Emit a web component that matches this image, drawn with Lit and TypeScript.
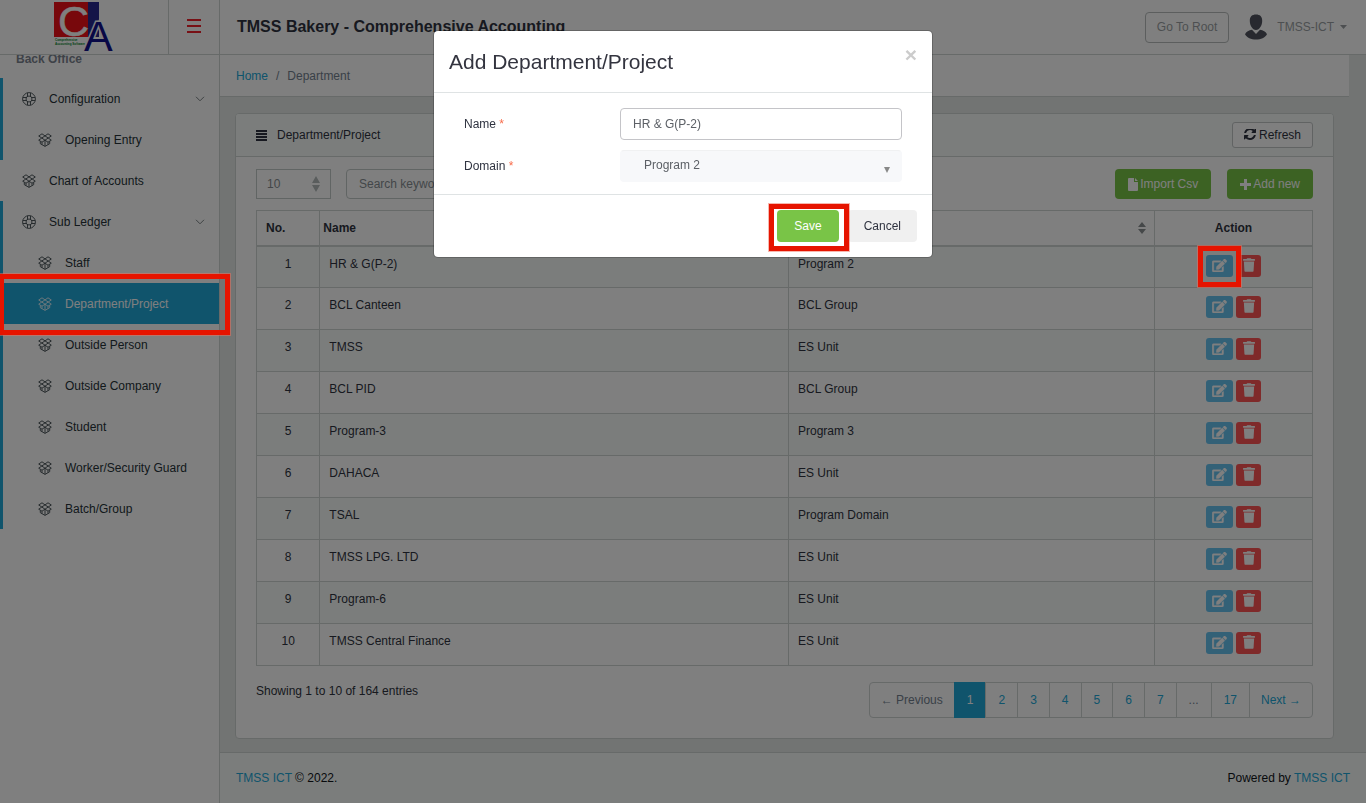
import { LitElement, html, css, nothing } from "lit";
import { customElement, state } from "lit/decorators.js";

interface Department {
  name: string;
  domain: string;
}

const departments: Department[] = [
  { name: "HR & G(P-2)", domain: "Program 2" },
  { name: "BCL Canteen", domain: "BCL Group" },
  { name: "TMSS", domain: "ES Unit" },
  { name: "BCL PID", domain: "BCL Group" },
  { name: "Program-3", domain: "Program 3" },
  { name: "DAHACA", domain: "ES Unit" },
  { name: "TSAL", domain: "Program Domain" },
  { name: "TMSS LPG. LTD", domain: "ES Unit" },
  { name: "Program-6", domain: "ES Unit" },
  { name: "TMSS Central Finance", domain: "ES Unit" },
];

const subLedger = [
  "Staff",
  "Department/Project",
  "Outside Person",
  "Outside Company",
  "Student",
  "Worker/Security Guard",
  "Batch/Group",
];

const boxIcon = html`<svg class="nav-icon" viewBox="0 0 14 14" fill="none" stroke="currentColor" stroke-linejoin="round">
  <path d="M4 .8 7 2.900 3.800 5 .7 3zM10 .8 7 2.900l3.200 2.100 3.100-2zM3.800 5 7 7.200 10.200 5M3.800 5 .7 7.200 4 9.200l3-2 3 2 3.300-2L10.200 5M2.300 8.400v2.300L7 13.400l4.700-2.700V8.400M7 7.200v6M4 9.200v2.400M10 9.200v2.400" />
</svg>`;

const supportIcon = html`<svg class="nav-icon" viewBox="0 0 14 14" fill="none" stroke="currentColor">
  <circle cx="7" cy="7" r="6.400" />
  <circle cx="7" cy="7" r="3" />
  <path d="M5.500.8v3.600M8.500.8v3.600M5.500 9.600v3.600M8.500 9.600v3.600M.8 5.500h3.600M.8 8.500h3.600M9.600 5.500h3.600M9.600 8.500h3.600" />
</svg>`;

const chevron = html`<svg class="chevron" viewBox="0 0 10 6" fill="none" stroke="currentColor"><path d="M1 .8 5 4.800 9 .8" /></svg>`;

const editIcon = html`<svg class="edit-icon" viewBox="0 0 576 512" fill="currentColor" stroke="currentColor" stroke-width="14"><path d="M402.600 83.200l90.200 90.200c3.800 3.800 3.800 10 0 13.800L274.400 405.600l-92.800 10.300c-12.400 1.400-22.900-9.100-21.500-21.500l10.300-92.800L388.800 83.200c3.800-3.800 10-3.800 13.800 0zm162-22.900l-48.800-48.800c-15.200-15.200-39.900-15.200-55.200 0l-35.400 35.400c-3.800 3.800-3.800 10 0 13.800l90.200 90.200c3.800 3.800 10 3.800 13.800 0l35.400-35.400c15.200-15.300 15.200-40 0-55.200zM384 346.200V448H64V128h229.800c3.200 0 6.200-1.300 8.500-3.500l40-40c7.600-7.600 2.200-20.500-8.500-20.500H48C21.500 64 0 85.500 0 112v352c0 26.500 21.500 48 48 48h352c26.500 0 48-21.500 48-48V306.200c0-10.700-12.900-16-20.500-8.500l-40 40c-2.200 2.300-3.500 5.300-3.500 8.500z" /></svg>`;

const trashIcon = html`<svg class="trash-icon" viewBox="0 0 448 512" fill="currentColor"><path d="M432 32H312l-9.400-18.700A24 24 0 0 0 281.100 0H166.800a23.720 23.720 0 0 0-21.400 13.300L136 32H16A16 16 0 0 0 0 48v32a16 16 0 0 0 16 16h416a16 16 0 0 0 16-16V48a16 16 0 0 0-16-16zM53.200 467a48 48 0 0 0 47.900 45h245.800a48 48 0 0 0 47.900-45L416 128H32z" /></svg>`;

const sortIcon = html`<svg class="sort" viewBox="0 0 8 12" fill="currentColor"><path d="M4 0 8 5H0zM0 7h8l-4 5z" /></svg>`;

const logo = html`<svg class="logo" viewBox="0 0 64 54" font-family="Liberation Sans, Arial, sans-serif">
  <rect x="2" y="2" width="34" height="35" fill="#f01018" />
  <rect x="36" y="2" width="11" height="35" fill="#282890" />
  <text x="6" y="36" font-size="43" fill="#fff" stroke="#fff" stroke-width=".5">C</text>
  <text x="32" y="51" font-size="43" fill="#10108c" stroke="#fff" stroke-width="3" paint-order="stroke">A</text>
  <g font-size="3" font-weight="700" fill="#00852c"><text x="3" y="41">Comprehensive</text><text x="3" y="45">Accounting Software</text></g>
</svg>`;

@customElement("app-root")
export class AppRoot extends LitElement {
  @state() private page = "1";

  static styles = css`
    :host {
      display: block;
      font: 12px/18px "Liberation Sans", Arial, sans-serif;
      color: #2f3340;
      background: #e4e9e7;
    }
    * { box-sizing: border-box; }
    a { color: #20a8d8; text-decoration: none; }
    button, input, select { font: inherit; color: inherit; margin: 0; }
    button { cursor: pointer; }
    ul, ol { list-style: none; margin: 0; padding: 0; }
    svg { display: block; flex: none; }

    .shell {
      min-height: 100vh;
      display: grid;
      grid-template: 55px 1fr / 220px minmax(0, 1fr);
    }

    .topbar {
      grid-column: 1 / -1;
      display: flex;
      align-items: stretch;
      background: #fff;
      border-bottom: 1px solid #cfd4d3;
    }
    .brand {
      width: 169px;
      display: flex;
      justify-content: center;
      border-right: 1px solid #cfd4d3;
    }
    .logo { width: 64px; height: 54px; }
    .toggle {
      width: 51px;
      display: flex;
      align-items: center;
      justify-content: center;
      padding: 0 0 2px;
      border: 0;
      border-right: 1px solid #cfd4d3;
      background: none;
      color: #f0202a;
    }
    .toggle svg { width: 14px; height: 14px; }
    .title { margin: 0; padding: 0 17px; align-self: center; font-size: 16px; line-height: 24px; font-weight: 700; }
    .account { margin-left: auto; padding-right: 19px; display: flex; align-items: center; color: #9a9fa3; }
    .root-btn {
      height: 31px;
      padding: 0 11px;
      border: 1px solid #b8bcbc;
      border-radius: 4px;
      background: none;
    }
    .avatar { width: 22px; height: 26px; margin: 0 10px 0 16px; }
    .caret { width: 7px; height: 4px; margin-left: 6px; }

    .sidebar { background: #fff; border-right: 1px solid #cfd4d3; }
    .nav-title {
      height: 23px;
      padding-left: 16px;
      overflow: hidden;
      font-weight: 700;
      line-height: 8px;
      color: #7d8490;
    }
    .group { border-left: 3px solid #20a8d8; }
    .nav-row { position: relative; }
    .nav-link {
      display: flex;
      align-items: center;
      gap: 13px;
      height: 41px;
      padding: 0 14px 0 19px;
      color: #263238;
    }
    .plain { padding-left: 22px; }
    .child { padding-left: 35px; }
    .active { background: #20a8d8; color: #fff; }
    .nav-icon { width: 14px; height: 14px; opacity: 0.8; }
    .chevron { width: 10px; height: 6px; margin-left: auto; opacity: 0.6; }

    .callout {
      position: absolute;
      border: 5px solid #e61400;
      outline: 1px solid #f0705e80;
      z-index: 15;
      pointer-events: none;
    }
    .callout-nav { inset: -9px -11px -11px -4px; }
    .callout-edit { inset: -9px -8px -10px -8px; }
    .callout-save { inset: -6px -10px -9px -8px; }

    .page { display: flex; flex-direction: column; }
    .content { flex: 1; padding-right: 17px; }
    .crumbs {
      display: flex;
      gap: 8px;
      padding: 12px 16px 11px;
      background: #fff;
      border-bottom: 1px solid #cfd4d3;
      color: #73818f;
    }
    .card {
      margin: 16px 15px 12px;
      background: #fff;
      border: 1px solid #cfd4d3;
      border-radius: 4px;
    }
    .card-head {
      display: flex;
      align-items: center;
      gap: 10px;
      height: 43px;
      padding: 0 20px;
      background: #f6faf9;
      border-bottom: 1px solid #cfd4d3;
      border-radius: 3px 3px 0 0;
    }
    .card-head h2 { margin: 0; font-size: 12px; font-weight: 400; }
    .lines { width: 11px; height: 11px; }
    .refresh {
      margin-left: auto;
      display: flex;
      align-items: center;
      gap: 3px;
      height: 26px;
      padding: 0 11px;
      border: 1px solid #c2c7c7;
      border-radius: 3px;
      background: #fff;
    }
    .refresh svg { width: 12px; height: 12px; }
    .card-body { padding: 12px 20px 20px; }
    .tools { display: flex; margin-bottom: 11px; }
    .length { position: relative; width: 75px; margin-right: 15px; color: #b5bbbb; }
    .length select {
      appearance: none;
      width: 100%;
      height: 30px;
      padding: 0 10px;
      border: 1px solid #c2cac9;
      border-radius: 0;
      background: #fff;
      color: #868e92;
    }
    .length svg { position: absolute; right: 11px; top: 7px; width: 8px; height: 16px; }
    .search {
      width: 200px;
      height: 30px;
      padding: 0 12px;
      border: 1px solid #c2cac9;
      border-radius: 4px;
      background: #fff;
    }
    .search::placeholder { color: #868e92; opacity: 1; }
    .tool-btn {
      display: flex;
      align-items: center;
      gap: 2px;
      height: 30px;
      padding: 0 13px;
      border: 0;
      border-radius: 4px;
      background: #79c447;
      color: #fff;
    }
    .tool-btn svg { height: 13px; }
    .import { margin-left: auto; margin-right: 16px; }

    .grid { width: 100%; border-collapse: collapse; table-layout: fixed; }
    .grid th, .grid td { border: 1px solid #cfd4d3; }
    .grid th { height: 35px; padding: 0 8px 0 3px; text-align: left; border-bottom-width: 2px; }
    .grid td { height: 42px; padding: 8px 9px; vertical-align: top; }
    .grid tbody tr:nth-child(odd) { background: #f6faf9; }
    .grid .col-no { width: 6%; }
    .grid .col-domain { width: 366px; }
    .grid .col-action { width: 158px; }
    .grid th.no { padding-left: 9px; }
    .grid td.no, .grid th.action { text-align: center; }
    .grid th.action { padding: 0; }
    .th-flex { display: flex; align-items: center; justify-content: space-between; }
    .sort { width: 8px; height: 12px; color: #8b9092; }
    .actions { display: flex; justify-content: center; gap: 3px; }
    .slot { position: relative; }
    .icon-btn {
      display: flex;
      align-items: flex-start;
      justify-content: center;
      width: 27px;
      height: 22px;
      padding: 4px 0 0;
      border: 0;
      border-radius: 3px;
      color: #fff;
    }
    .edit { background: #67c2ef; }
    .delete { width: 25px; padding-top: 3px; background: #ff5454; }
    .edit-icon { width: 15px; height: 13px; }
    .trash-icon { width: 12px; height: 14px; }

    .table-foot { display: flex; justify-content: space-between; align-items: flex-start; margin-top: 16px; }
    .pager { display: flex; }
    .pager button {
      height: 36px;
      padding: 0 12px;
      margin-left: -1px;
      border: 1px solid #cfd4d3;
      background: #fff;
      color: #20a8d8;
    }
    .pager li:first-child button { padding: 0 11px; border-radius: 4px 0 0 4px; }
    .pager li:last-child button { padding: 0 11px; border-radius: 0 4px 4px 0; }
    .pager .muted { color: #73818f; }
    .pager .current { background: #20a8d8; border-color: #20a8d8; color: #fff; }

    .footer {
      display: flex;
      align-items: center;
      justify-content: space-between;
      height: 51px;
      padding: 0 16px;
      background: #f6faf9;
      border-top: 1px solid #cfd4d3;
      color: #101418;
    }

    .backdrop { position: fixed; inset: 0; background: #00000080; z-index: 10; }
    .layer {
      position: fixed;
      inset: 0;
      z-index: 20;
      display: flex;
      align-items: flex-start;
      justify-content: center;
      padding: 30px 16px;
    }
    .modal {
      width: 100%;
      max-width: 500px;
      background: #fff;
      background-clip: padding-box;
      border: 1px solid #00000033;
      border-radius: 5px;
    }
    .modal-head {
      display: flex;
      align-items: flex-start;
      justify-content: space-between;
      padding: 15px;
      border-bottom: 1px solid #dfe3e4;
    }
    .modal-head h1 { margin: 0; font-size: 21px; line-height: 31px; font-weight: 400; color: #33343f; }
    .close { padding: 0; border: 0; background: none; font-size: 21px; line-height: 18px; font-weight: 700; color: #ccc; }
    .modal-body { display: grid; gap: 10px; padding: 15px 15px 12px; }
    .field { display: grid; grid-template-columns: 1fr 2fr; align-items: center; }
    .field label { padding: 0 15px; }
    .req { color: #f86c4b; }
    .control { position: relative; padding: 0 15px; display: flex; }
    .control input, .control select {
      width: 100%;
      height: 32px;
      padding: 0 12px;
      border: 1px solid #c4c4c8;
      border-radius: 4px;
      background: #fff;
      color: #5c6066;
    }
    .control select {
      appearance: none;
      padding: 0 23px 2px;
      border-color: #f0f1f2 #f7f8fa #f7f8fa;
      background: #f7f8fa;
    }
    .control .drop { position: absolute; right: 27px; bottom: 9px; width: 6px; height: 6px; color: #888; }
    .modal-foot { display: flex; justify-content: flex-end; gap: 9px; padding: 15px; border-top: 1px solid #dfe3e4; }
    .btn { display: block; height: 32px; padding: 0 16px; border: 0; border-radius: 4px; background: #f0f0f0; }
    .save { padding: 0 17px; background: #79c447; color: #fff; }
  `;

  private navChild(label: string) {
    const active = label === "Department/Project";
    return html`<li class="nav-row">
      <a class="nav-link child ${active ? "active" : ""}" href="#">${boxIcon}<span>${label}</span></a>
      ${active ? html`<span class="callout callout-nav"></span>` : nothing}
    </li>`;
  }

  private pageButton(label: string, muted = false) {
    const cls = label === this.page ? "current" : muted ? "muted" : "";
    return html`<li><button type="button" class=${cls} @click=${() => { if (/^\d+$/.test(label)) this.page = label; }}>${label}</button></li>`;
  }

  render() {
    return html`
      <div class="shell">
        <header class="topbar">
          <div class="brand">${logo}</div>
          <button class="toggle" type="button" aria-label="Toggle sidebar">
            <svg viewBox="0 0 14 14" stroke="currentColor" stroke-width="2"><path d="M0 1h14M0 7h14M0 13h14" /></svg>
          </button>
          <p class="title">TMSS Bakery - Comprehensive Accounting</p>
          <div class="account">
            <button class="root-btn" type="button">Go To Root</button>
            <svg class="avatar" viewBox="0 0 22 26" fill="#50535e">
              <path d="M11 .5c4 0 6.200 2 6.200 6.400 0 4.300-2.600 9-6.200 9s-6.200-4.700-6.200-9C4.800 2.500 7 .5 11 .5zM7 15.800l4 4.200 4-4.200c3 .6 6 2 7 4.400-2 3.300-6 5.300-11 5.300S2 23.500 0 20.200c1-2.400 4-3.800 7-4.400z" />
            </svg>
            <span>TMSS-ICT</span>
            <svg class="caret" viewBox="0 0 7 4" fill="currentColor"><path d="M0 0h7L3.500 4z" /></svg>
          </div>
        </header>

        <nav class="sidebar" aria-label="Main">
          <div class="nav-title">Back Office</div>
          <ul class="group">
            <li><a class="nav-link" href="#">${supportIcon}<span>Configuration</span>${chevron}</a></li>
            ${this.navChild("Opening Entry")}
          </ul>
          <a class="nav-link plain" href="#">${boxIcon}<span>Chart of Accounts</span></a>
          <ul class="group">
            <li><a class="nav-link" href="#">${supportIcon}<span>Sub Ledger</span>${chevron}</a></li>
            ${subLedger.map((label) => this.navChild(label))}
          </ul>
        </nav>

        <div class="page">
          <main class="content">
            <div class="crumbs"><a href="#">Home</a><span>/</span><span>Department</span></div>
            <section class="card">
              <div class="card-head">
                <svg class="lines" viewBox="0 0 11 11" stroke="currentColor" stroke-width="2"><path d="M0 1h11M0 4h11M0 7h11M0 10h11" /></svg>
                <h2>Department/Project</h2>
                <button class="refresh" type="button">
                  <svg viewBox="0 0 1536 1536" fill="currentColor"><path transform="translate(0 -128)" d="M1511 928q0 5-1 7-64 268-268 434.500t-478 166.500q-146 0-282.500-55t-243.500-157l-129 129q-19 19-45 19t-45-19-19-45v-448q0-26 19-45t45-19h448q26 0 45 19t19 45-19 45l-137 137q71 66 161 102t187 36q134 0 250-65t186-179q11-17 53-117 8-23 30-23h192q13 0 22.500 9.500t9.500 22.500zm25-800v448q0 26-19 45t-45 19h-448q-26 0-45-19t-19-45 19-45l138-138q-148-137-349-137-134 0-250 65t-186 179q-11 17-53 117-8 23-30 23h-199q-13 0-22.500-9.500t-9.500-22.500v-7q65-268 270-434.500t480-166.500q146 0 284 55.500t245 156.500l130-129q19-19 45-19t45 19 19 45z" /></svg>
                  <span>Refresh</span>
                </button>
              </div>
              <div class="card-body">
                <div class="tools">
                  <div class="length">
                    <select aria-label="Rows per page"><option>10</option></select>
                    <svg viewBox="0 0 8 16" fill="currentColor"><path d="M4 0 8 7H0zM0 9h8l-4 7z" /></svg>
                  </div>
                  <input class="search" type="search" aria-label="Search" placeholder="Search keyword" />
                  <button class="tool-btn import" type="button">
                    <svg width="10" viewBox="0 0 10 13" fill="currentColor"><path d="M1 0h5v4h4v8q0 1-1 1H1q-1 0-1-1V1q0-1 1-1zM7 0l3 3H7z" /></svg>
                    <span>Import Csv</span>
                  </button>
                  <button class="tool-btn" type="button">
                    <svg width="11" viewBox="0 0 11 13" stroke="currentColor" stroke-width="3"><path d="M0 6.500h11M5.500 1v11" /></svg>
                    <span>Add new</span>
                  </button>
                </div>
                <table class="grid">
                  <colgroup><col class="col-no" /><col /><col class="col-domain" /><col class="col-action" /></colgroup>
                  <thead>
                    <tr>
                      <th class="no">No.</th>
                      <th><div class="th-flex">Name ${sortIcon}</div></th>
                      <th><div class="th-flex">Domain ${sortIcon}</div></th>
                      <th class="action">Action</th>
                    </tr>
                  </thead>
                  <tbody>
                    ${departments.map((d, i) => html`<tr>
                      <td class="no">${i + 1}</td>
                      <td>${d.name}</td>
                      <td>${d.domain}</td>
                      <td>
                        <div class="actions">
                          <div class="slot">
                            <button class="icon-btn edit" type="button" aria-label="Edit">${editIcon}</button>
                            ${i === 0 ? html`<span class="callout callout-edit"></span>` : nothing}
                          </div>
                          <button class="icon-btn delete" type="button" aria-label="Delete">${trashIcon}</button>
                        </div>
                      </td>
                    </tr>`)}
                  </tbody>
                </table>
                <div class="table-foot">
                  <span>Showing 1 to 10 of 164 entries</span>
                  <ul class="pager">
                    ${this.pageButton("← Previous", true)}
                    ${["1", "2", "3", "4", "5", "6", "7"].map((p) => this.pageButton(p))}
                    ${this.pageButton("...", true)}
                    ${this.pageButton("17")}
                    ${this.pageButton("Next →")}
                  </ul>
                </div>
              </div>
            </section>
          </main>
          <footer class="footer">
            <span><a href="#">TMSS ICT</a> © 2022.</span>
            <span>Powered by <a href="#">TMSS ICT</a></span>
          </footer>
        </div>
      </div>

      <div class="backdrop"></div>
      <div class="layer">
        <form class="modal" role="dialog" aria-labelledby="modal-title" @submit=${(e: Event) => e.preventDefault()}>
          <div class="modal-head">
            <h1 id="modal-title">Add Department/Project</h1>
            <button class="close" type="button" aria-label="Close">×</button>
          </div>
          <div class="modal-body">
            <div class="field">
              <label for="name">Name <span class="req">*</span></label>
              <div class="control"><input id="name" type="text" .value=${"HR & G(P-2)"} /></div>
            </div>
            <div class="field">
              <label for="domain">Domain <span class="req">*</span></label>
              <div class="control">
                <select id="domain"><option>Program 2</option></select>
                <svg class="drop" viewBox="0 0 6 6" fill="currentColor"><path d="M0 0h6L3 6z" /></svg>
              </div>
            </div>
          </div>
          <div class="modal-foot">
            <div class="slot">
              <button class="btn save" type="submit">Save</button>
              <span class="callout callout-save"></span>
            </div>
            <button class="btn" type="button">Cancel</button>
          </div>
        </form>
      </div>
    `;
  }
}
